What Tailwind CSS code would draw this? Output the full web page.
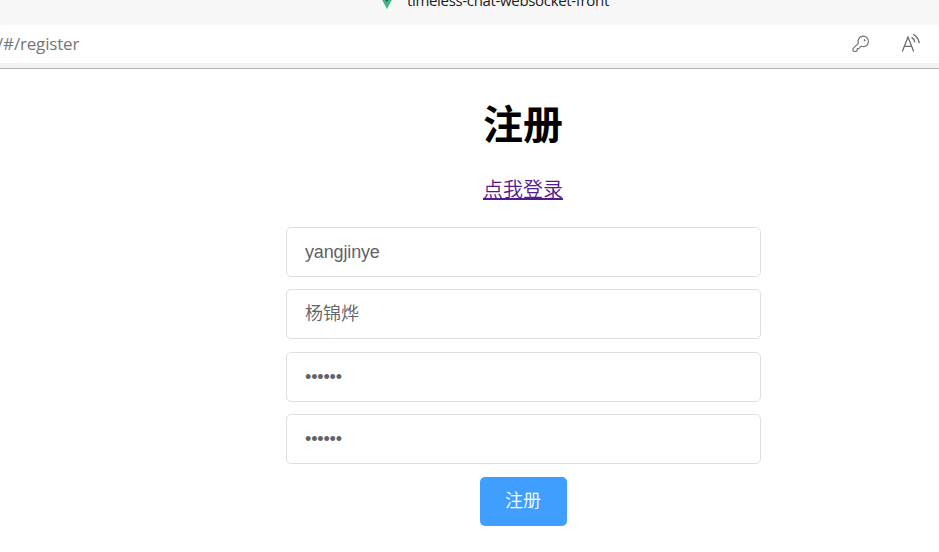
<!DOCTYPE html>
<html lang="zh-CN">
<head>
<meta charset="utf-8">
<title>timeless-chat-websocket-front</title>
<script src="https://cdn.jsdelivr.net/npm/@tailwindcss/browser@4"></script>
</head>
<body class="h-[552px] w-[939px] overflow-hidden bg-white font-['Liberation_Sans','Noto_Sans_CJK_SC',sans-serif]">
<header class="h-[69px] border-b border-[#b4b4b4] bg-[#f3f3f3]">
  <div class="flex h-[25px] items-start bg-[#f7f7f7] pl-[380px]">
    <svg class="mt-[-5px] h-[14px] w-[14px] shrink-0" viewBox="0 0 14 14"><path d="M0 1h14L7 14z" fill="#41b883"/><path d="M3 1h8L7 7z" fill="#34495e"/></svg>
    <span class="mt-[-10px] ml-[13px] h-5 w-[202px] text-[15px] leading-5 whitespace-nowrap text-[#1b1b1b] font-['Open_Sans','Noto_Sans',sans-serif] tracking-[-0.33px]">timeless-chat-websocket-front</span>
  </div>
  <div class="flex h-[38px] items-center justify-between bg-white pr-[18px]">
    <span class="ml-[-3px] text-[17px] leading-6 text-[#757575] font-['Open_Sans','Noto_Sans',sans-serif] tracking-[-0.17px]">/#/register</span>
    <div class="flex items-center gap-[30px]">
      <svg class="h-[20px] w-[20px]" viewBox="0 0 20 20" fill="none" stroke="#777" stroke-width="1.2" stroke-linejoin="round"><path d="M7.4 9.2 2 14.6v2l.9.9h2.1l1.2-1.2v-1.6h1.6l2.5-2.5a5.2 5.2 0 1 0-2.9-3z"/><circle cx="13.7" cy="6.2" r="1" fill="#777" stroke="none"/></svg>
      <svg class="mt-[-2px] h-[20px] w-[20px]" viewBox="0 0 20 20" fill="none" stroke="#6d6d6d" stroke-width="1.3" stroke-linecap="round"><path d="M1.5 18 7 4l5.5 14M3.4 13.3h7.2M10.9 4.6c1.6 1 2.6 2.4 2.9 4.2M12.6 1.5c3 1.8 4.9 4.5 5.6 8.2"/></svg>
    </div>
  </div>
</header>
<main class="ml-[286px] flex w-[475px] flex-col items-center">
  <h1 class="mt-[26px] mr-px text-[40px] leading-[60px] font-bold text-black">注册</h1>
  <a href="#" class="mt-[20px] mr-px text-[20px] leading-[30px] font-[350] text-[#551a8b] underline decoration-2 underline-offset-1">点我登录</a>
  <form class="mt-[22px] flex w-full flex-col text-[18px] text-[#606266]">
    <div class="flex h-[50px] items-center rounded-[5px] border border-[#dcdfe6] px-[18px] tracking-[-0.15px]">yangjinye</div>
    <div class="mt-3 flex h-[50px] items-center rounded-[5px] border border-[#dcdfe6] px-[18px] pt-px font-[350]">杨锦烨</div>
    <div class="mt-[13px] flex h-[50px] items-center rounded-[5px] border border-[#dcdfe6] px-[18px] tracking-[-0.15px]">••••••</div>
    <div class="mt-3 flex h-[50px] items-center rounded-[5px] border border-[#dcdfe6] px-[18px] tracking-[-0.15px]">••••••</div>
  </form>
  <button type="button" class="mt-[13px] h-[49px] w-[87px] rounded-[5px] bg-[#409eff] pr-px text-[18px] font-[350] text-white">注册</button>
</main>
</body>
</html>
